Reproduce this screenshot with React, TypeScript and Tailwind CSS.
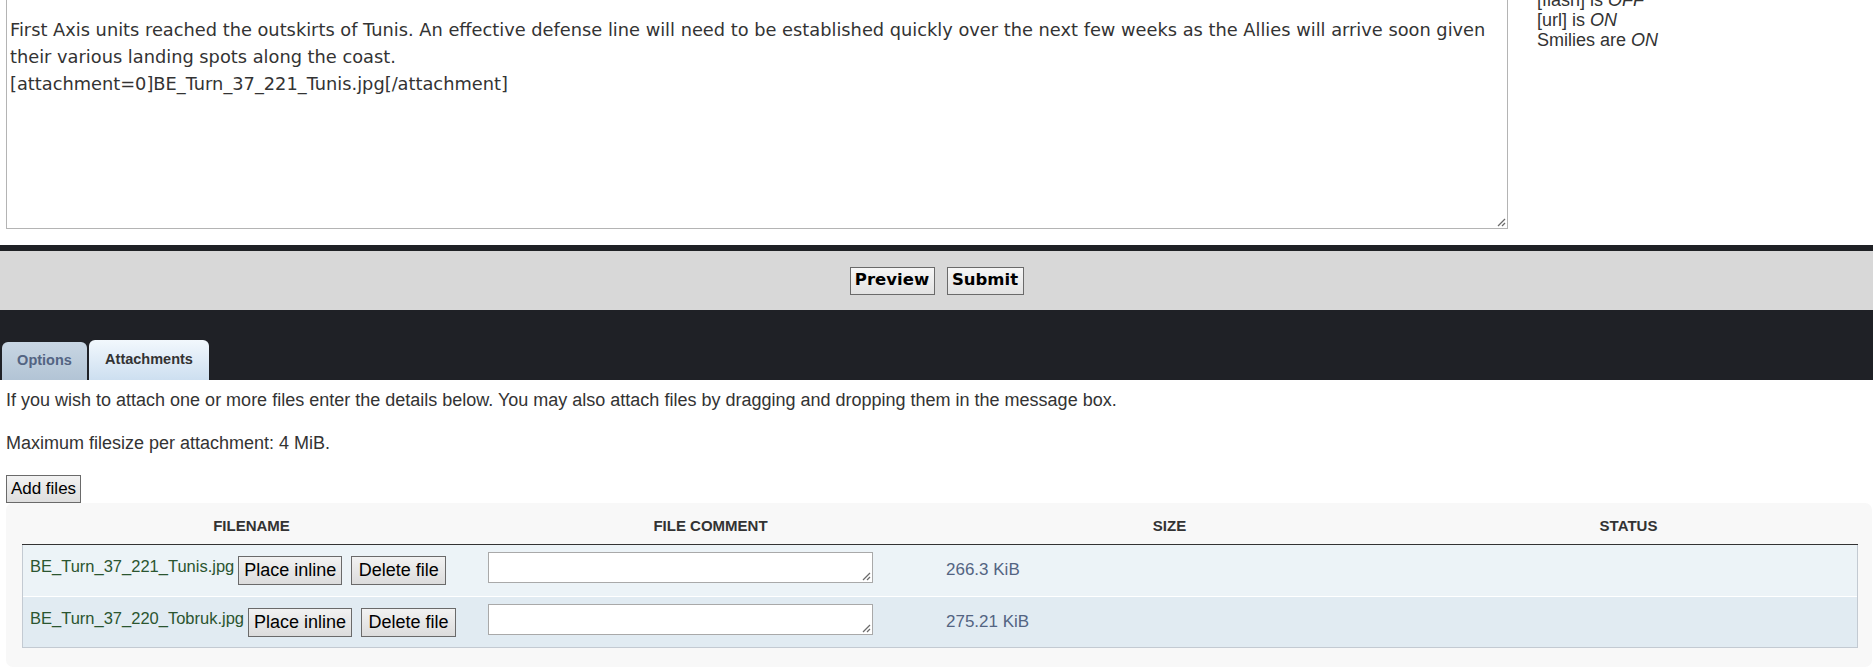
import React from 'react';

/* ── Resize grip drawn in textarea corners ─────────────── */
const Grip = () => (
  <svg width="10" height="10" viewBox="0 0 10 10" className="absolute bottom-[1px] right-[1px]">
    <line x1="9" y1="2" x2="2" y2="9" stroke="#6b6b6b" strokeWidth="1.2" />
    <line x1="9" y1="6" x2="6" y2="9" stroke="#6b6b6b" strokeWidth="1.2" />
  </svg>
);

const files = [
  { name: 'BE_Turn_37_221_Tunis.jpg', size: '266.3 KiB', row: 'h-[51px] bg-[#ecf3f7]' },
  { name: 'BE_Turn_37_220_Tobruk.jpg', size: '275.21 KiB', row: 'h-[51px] bg-[#e1ebf2] border-t border-white' },
];

export default function App() {
  return (
    <div className="w-full h-[670px] overflow-hidden bg-white text-[#333] font-['Liberation_Sans',Arial,sans-serif]">
      {/* ── Message box + bbcode status ───────────────── */}
      <div className="flex h-[245px]">
        <div className="pl-[6px]">
          <div className="relative w-[1502px] h-[229px] border-x border-b border-[#b4b4b4] pt-[16px] pl-[3px] font-['DejaVu_Sans',sans-serif] text-[17.8px] leading-[27px] text-[#333] whitespace-nowrap">
            <div>
              First Axis units reached the outskirts of Tunis. An effective defense line will need to be established quickly over the next few weeks as the Allies will arrive soon given
            </div>
            <div>their various landing spots along the coast.</div>
            <div>[attachment=0]BE_Turn_37_221_Tunis.jpg[/attachment]</div>
            <Grip />
          </div>
        </div>
        <div className="pl-[29px] -mt-[10px] text-[18px] leading-[20px] text-[#333]">
          <div>
            [flash] is <em>OFF</em>
          </div>
          <div>
            [url] is <em>ON</em>
          </div>
          <div>
            Smilies are <em>ON</em>
          </div>
        </div>
      </div>

      {/* ── Submit buttons ────────────────────────────── */}
      <div className="h-[6px] bg-[#1f2125]" />
      <div className="h-[59px] bg-[#d8d8d8] flex items-center justify-center gap-[12px]">
        <button className="w-[85px] h-[28px] border border-[#6a6a6a] bg-gradient-to-b from-[#f7f7f7] to-[#e2e2e2] font-['DejaVu_Sans',sans-serif] font-bold text-[16.5px] text-black">
          Preview
        </button>
        <button className="w-[77px] h-[28px] border border-[#6a6a6a] bg-gradient-to-b from-[#f7f7f7] to-[#e2e2e2] font-['DejaVu_Sans',sans-serif] font-bold text-[16.5px] text-black">
          Submit
        </button>
      </div>

      {/* ── Tabs ──────────────────────────────────────── */}
      <div className="h-[70px] bg-[#1f2126] flex items-end pl-[2px] gap-[2px]">
        <div className="w-[85px] h-[38px] rounded-t-[6px] bg-gradient-to-b from-[#c8d6e3] to-[#b2c4d5] flex items-center justify-center text-[14.5px] font-bold text-[#536482]">
          Options
        </div>
        <div className="w-[120px] h-[40px] rounded-t-[6px] bg-gradient-to-b from-[#f2f8fd] to-[#cddff0] flex items-center justify-center text-[14.5px] font-bold text-[#333]">
          Attachments
        </div>
      </div>

      {/* ── Attachments panel ─────────────────────────── */}
      <div className="pl-[6px]">
        <p className="mt-[10px] text-[18px] leading-[20px]">
          If you wish to attach one or more files enter the details below. You may also attach files by dragging and dropping them in the message box.
        </p>
        <p className="mt-[23px] text-[18px] leading-[20px]">Maximum filesize per attachment: 4 MiB.</p>
        <button className="mt-[22px] w-[75px] h-[28px] border border-[#6a6a6a] bg-gradient-to-b from-[#f2f2f2] to-[#dedede] text-[17px] text-black">
          Add files
        </button>

        <div className="w-[1866px] h-[164px] rounded-[7px] bg-[#f8f8f8] pl-[16px] pr-[14px]">
          {/* header */}
          <div className="grid grid-cols-4 h-[42px] pt-[6px] items-center border-b border-[#333] text-[15px] font-bold text-[#333]">
            <div className="text-center">FILENAME</div>
            <div className="text-center">FILE COMMENT</div>
            <div className="text-center">SIZE</div>
            <div className="text-center">STATUS</div>
          </div>

          {/* rows */}
          <div className="border-x border-b border-[#c3cad2]">
            {files.map((f) => (
              <div key={f.name} className={`grid grid-cols-4 ${f.row}`}>
                <div className="flex items-start pl-[7px] pt-[10px]">
                  <span className="mt-[2px] text-[16.5px] leading-[18px] text-[#2b5530]">{f.name}</span>
                  <button className="ml-[4px] mt-[1px] w-[104px] h-[29px] border border-[#6a6a6a] bg-gradient-to-b from-[#f2f2f2] to-[#dcdcdc] text-[18px] text-black">
                    Place inline
                  </button>
                  <button className="ml-[9px] mt-[1px] w-[95px] h-[29px] border border-[#6a6a6a] bg-gradient-to-b from-[#f2f2f2] to-[#dcdcdc] text-[18px] text-black">
                    Delete file
                  </button>
                </div>
                <div className="pl-[6px] pt-[7px]">
                  <div className="relative w-[385px] h-[31px] bg-white border border-[#a9a9a9]">
                    <Grip />
                  </div>
                </div>
                <div className="pl-[6px] pt-[16px] text-[17px] leading-[18px] text-[#536482]">{f.size}</div>
                <div />
              </div>
            ))}
          </div>
        </div>
      </div>
    </div>
  );
}
